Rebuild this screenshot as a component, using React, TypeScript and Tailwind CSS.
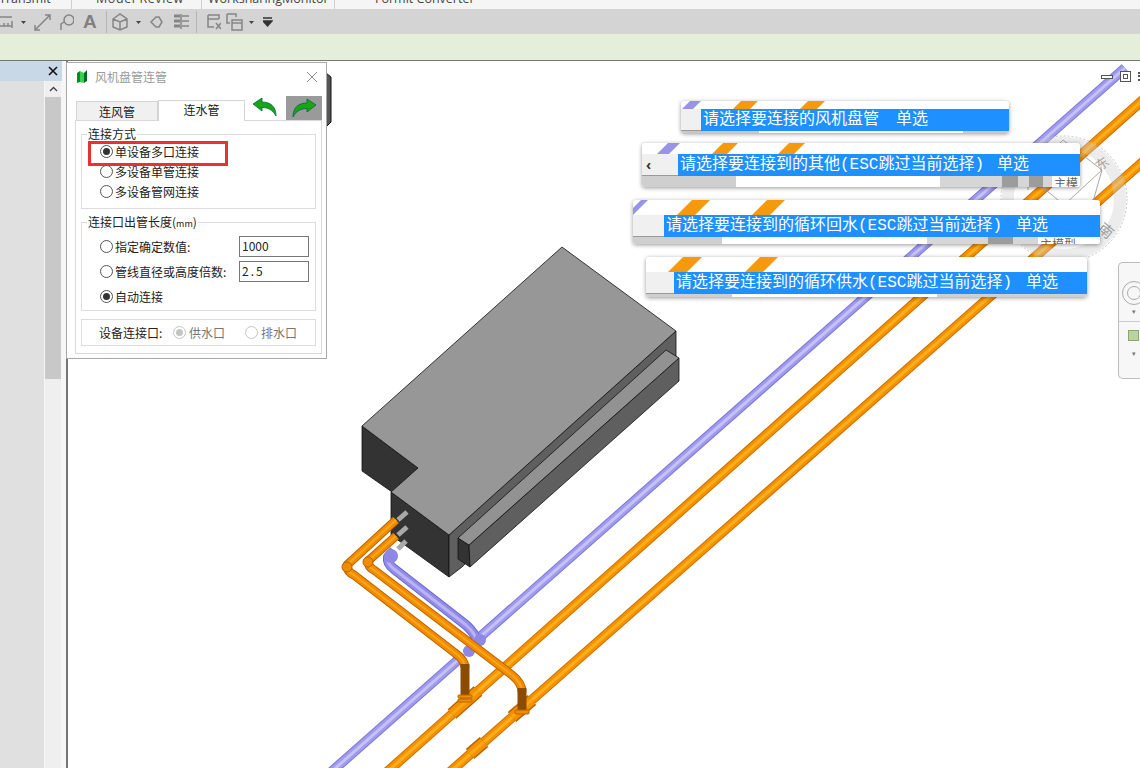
import React from 'react';

const CJK = { fontFamily: '"Noto Sans CJK SC", sans-serif' };

interface Stripe {
  x: number;
  w: number;
  color: string;
}

interface Banner {
  left: number;
  top: number;
  width: number;
  stripH: number;
  cellW: number;
  blueH: number;
  bottomH: number;
  chevron?: boolean;
  title: string;
  gap: number;
  stripes: Stripe[];
  slots: { w: number; cls: string; label?: string }[];
}

const BANNERS: Banner[] = [
  {
    left: 681, top: 40, width: 328, stripH: 8, cellW: 20, blueH: 22, bottomH: 2, title: '请选择要连接的风机盘管', gap: 17,
    stripes: [{ x: 1, w: 19, color: '#9a94e6' }, { x: 52, w: 25, color: '#f59a0c' }, { x: 119, w: 25, color: '#f59a0c' }],
    slots: [{ w: 78, cls: 'bg-[#c8c8c8]' }, { w: 204, cls: 'bg-white' }, { w: 46, cls: 'bg-[#c8c8c8]' }],
  },
  {
    left: 642, top: 82, width: 438, stripH: 11, cellW: 36, blueH: 22, bottomH: 11, chevron: true, title: '请选择要连接到的其他(ESC跳过当前选择)', gap: 13,
    stripes: [{ x: 15, w: 23, color: '#9a94e6' }, { x: 70, w: 26, color: '#f59a0c' }, { x: 136, w: 27, color: '#f59a0c' }],
    slots: [
      { w: 94, cls: 'bg-[#cfcfcf]' }, { w: 204, cls: 'bg-white' }, { w: 62, cls: 'bg-[#d6d6d6]' },
      { w: 16, cls: 'bg-[#9c9c9c]' }, { w: 11, cls: 'bg-[#d6d6d6]' }, { w: 14, cls: 'bg-[#9c9c9c]' },
      { w: 9, cls: 'bg-[#d6d6d6]' }, { w: 28, cls: 'bg-white', label: '主模' },
    ],
  },
  {
    left: 633, top: 139, width: 467, stripH: 15, cellW: 31, blueH: 22, bottomH: 7, title: '请选择要连接到的循环回水(ESC跳过当前选择)', gap: 14,
    stripes: [{ x: 0, w: 8, color: '#9a94e6' }, { x: 44, w: 33, color: '#f59a0c' }, { x: 119, w: 33, color: '#f59a0c' }],
    slots: [
      { w: 89, cls: 'bg-[#cfcfcf]' }, { w: 205, cls: 'bg-white' }, { w: 61, cls: 'bg-[#d6d6d6]' },
      { w: 25, cls: 'bg-[#9c9c9c]' }, { w: 25, cls: 'bg-[#d6d6d6]' }, { w: 62, cls: 'bg-white', label: '主模型' },
    ],
  },
  {
    left: 646, top: 196, width: 441, stripH: 15, cellW: 28, blueH: 22, bottomH: 3, title: '请选择要连接到的循环供水(ESC跳过当前选择)', gap: 14,
    stripes: [{ x: 22, w: 34, color: '#f59a0c' }, { x: 99, w: 33, color: '#f59a0c' }],
    slots: [{ w: 86, cls: 'bg-[#cfcfcf]' }, { w: 205, cls: 'bg-white' }, { w: 150, cls: 'bg-[#cfcfcf]' }],
  },
];

function Pipe({ d, colors, widths }: { d: string; colors: string[]; widths: number[] }) {
  return (
    <>
      {colors.map((c, i) => (
        <path key={i} d={d} fill="none" stroke={c} strokeWidth={widths[i]} strokeLinejoin="round" strokeLinecap="butt" />
      ))}
    </>
  );
}

const ORANGE = { colors: ['#c96f00', '#f39200', '#ffae1a'], widths: [10, 8, 3] };
const THIN_ORANGE = { colors: ['#b86400', '#f08c00', '#ffa514'], widths: [9, 7, 2] };
const PURPLE = { colors: ['#7d77d8', '#a09bec', '#c6c2f8'], widths: [10, 8, 3] };
const TEE = { colors: ['#b86400', '#f39200', '#ffa514'], widths: [13, 10, 3] };

function Scene() {
  return (
    <svg className="absolute inset-0 h-full w-full" viewBox="68 61 1072 707">
      {/* long mains */}
      <Pipe d="M330 773 L458 660" {...PURPLE} />
      <Pipe d="M480 637 L1125 68" {...PURPLE} />
      <Pipe d="M387 772 L1145 98" {...ORANGE} />
      <Pipe d="M450 772 L1145 160" {...ORANGE} />
      <Pipe d="M452 714 L478 691" {...TEE} />
      <Pipe d="M512 717 L532 700" {...TEE} />
      <Pipe d="M470 754 L484 742" {...TEE} />

      {/* compass watermark, washed over the pipes */}
      <circle cx="1064" cy="199" r="56" fill="none" stroke="#cfcfcf" strokeOpacity="0.4" strokeWidth="12" />
      <circle cx="1064" cy="199" r="63" fill="none" stroke="#c4c4c4" strokeDasharray="2 2" />
      <g fill="none" stroke="#a8a8a8">
        <path d="M1063 140 L1102 170 L1064 205 L1028 175 Z" />
        <path d="M1064 205 V222 M1102 170 L1092 205 M1028 175 V190" />
      </g>
      <text x="1096" y="168" fontSize="13" fill="#a0a0a0" transform="rotate(-35 1103 164)" style={CJK}>东</text>
      <text x="1099" y="236" fontSize="15" fill="#a0a0a0" transform="rotate(40 1106 230)" style={CJK}>南</text>

      {/* fan coil body */}
      <g stroke="#111" strokeWidth="0.8" strokeLinejoin="round">
        <polygon points="362,426 418,468 392,492 362,471" fill="#333" />
        <polygon points="391,492 449,535 449,577 391,535" fill="#333" />
        <polygon points="449,535 676,331 676,357 462,567 449,577" fill="#5f5f5f" />
        <polygon points="562,247 676,331 449,535 391,492 418,468 362,426" fill="#979797" />
        <polygon points="458,538 469,545 470,567 458,559" fill="#333" />
        <polygon points="469,545 679,358 679,381 470,567" fill="#5f5f5f" />
        <polygon points="666,350 679,358 469,545 458,538" fill="#929292" />
      </g>

      {/* stub ends */}
      <g stroke="#a9a9a9" strokeWidth="5">
        <path d="M398 520 L407 512" />
        <path d="M398 535 L407 527" />
        <path d="M398 549 L406 541" />
      </g>

      {/* branch pipes */}
      <Pipe d="M394 551 L388 557 Q387 564 394 569 L466 625 Q476 634 477 642" colors={['#6c66cc', '#928ce8', '#b8b4f5']} widths={[10, 8, 3]} />
      <circle cx="391" cy="556" r="7" fill="#8d87e6" />
      <circle cx="480" cy="640" r="6" fill="#8d87e6" />
      <circle cx="469" cy="651" r="6" fill="#8d87e6" />
      <Pipe d="M396 520 L347 565 Q347 572 354 575 L455 653 Q465 660 465 668" {...THIN_ORANGE} />
      <Pipe d="M396 536 L368 561 Q368 567 374 570 L512 675 Q522 683 522 692" {...THIN_ORANGE} />
      <path d="M465 664 L465 698" stroke="#8c4c00" strokeWidth="9" />
      <path d="M522 688 L522 712" stroke="#8c4c00" strokeWidth="9" />
      <g fill="#f08c00" stroke="#b86400">
        <rect x="458" y="695" width="14" height="3" rx="1" />
        <rect x="458" y="699" width="14" height="3" rx="1" />
        <rect x="515" y="710" width="14" height="4" rx="1" />
        <circle cx="347" cy="567" r="5" />
        <circle cx="368" cy="562" r="5" />
      </g>

      {/* grey block behind the dialog */}
      <polygon points="326,73 331,77 331,122 326,127" fill="#555" stroke="#111" strokeWidth="1" />
    </svg>
  );
}

function Radio({ on, disabled }: { on?: boolean; disabled?: boolean }) {
  return (
    <span className={`flex h-[13px] w-[13px] shrink-0 items-center justify-center rounded-full border bg-white ${disabled ? 'border-[#c4c4c4]' : 'border-[#555]'}`}>
      {on && <span className={`h-[7px] w-[7px] rounded-full ${disabled ? 'bg-[#c4c4c4]' : 'bg-[#333]'}`} />}
    </span>
  );
}

function RadioRow({ label, on, className }: { label: string; on?: boolean; className?: string }) {
  return (
    <div className={`flex items-center gap-[2px] ${className ?? ''}`}>
      <Radio on={on} />
      <span>{label}</span>
    </div>
  );
}

function Group({ legend, className, children }: { legend: React.ReactNode; className: string; children: React.ReactNode }) {
  return (
    <div className={`relative border border-[#dcdcdc] ${className}`}>
      <span className="absolute left-[5px] top-[-9px] bg-white px-px leading-[16px]">{legend}</span>
      {children}
    </div>
  );
}

function Arrow({ flip }: { flip?: boolean }) {
  return (
    <svg width="26" height="20" viewBox="0 0 26 20" style={flip ? { transform: 'scaleX(-1)' } : undefined}>
      <path d="M1 7 L10 1 L10 5 C18 5 24 9 24 19 C21 13 16 10.5 10 10.5 L10 14 Z" fill="#16a616" stroke="#064" strokeWidth="0.8" />
    </svg>
  );
}

function Dialog() {
  return (
    <div className="absolute left-[66px] top-px flex h-[297px] w-[261px] flex-col border border-[#a8a8a8] bg-white text-[12px] text-[#222]" style={CJK}>
      <div className="flex h-[27px] shrink-0 items-center pl-[9px] pr-[8px]">
        <svg width="12" height="15" viewBox="0 0 12 15">
          <path d="M1 4 L4 2 V13 L1 14 Z" fill="#0a8a2a" />
          <path d="M4 2 L8 4 V14 L4 13 Z" fill="#35d24f" />
          <path d="M8 4 L11 1 V12 L8 14 Z" fill="#0a6a22" />
        </svg>
        <span className="ml-[7px] text-[#9a9a9a]">风机盘管连管</span>
        <svg className="ml-auto" width="12" height="12" viewBox="0 0 12 12">
          <path d="M1 1 L11 11 M11 1 L1 11" stroke="#8c8c8c" fill="none" />
        </svg>
      </div>
      <div className="flex h-[30px] shrink-0 items-end pl-[9px]">
        <div className="flex h-[19px] w-[82px] items-center justify-center border border-b-0 border-[#d4d4d4] bg-[#f0f0f0] pt-[2px]">连风管</div>
        <div className="z-10 -mb-px flex h-[21px] w-[87px] items-center justify-center border border-b-0 border-[#d4d4d4] bg-white pb-[3px]">连水管</div>
        <div className="mb-[1px] ml-[7px] flex h-[24px] w-[26px] items-center"><Arrow /></div>
        <div className="ml-[8px] flex h-[24px] w-[36px] items-center justify-center bg-[#9a9a9a]"><Arrow flip /></div>
      </div>
      <div className="ml-[8px] flex h-[234px] w-[247px] flex-col border border-[#d9d9d9] px-[5px] pt-[13px]">
        <Group legend="连接方式" className="h-[75px]">
          <div className="flex flex-col gap-[3px] pl-[18px] pt-[8px] leading-[17px]">
            <RadioRow label="单设备多口连接" on />
            <RadioRow label="多设备单管连接" />
            <RadioRow label="多设备管网连接" />
          </div>
        </Group>
        <Group legend={<>连接口出管长度(<span className="text-[9px]">mm</span>)</>} className="mt-[13px] h-[89px]">
          <div className="flex flex-col pl-[18px] pr-[6px] pt-[13px]">
            <div className="flex h-[21px] items-center justify-between">
              <RadioRow label="指定确定数值:" />
              <div className="h-[21px] w-[70px] border border-[#777] pl-[2px] text-[12px] leading-[17px]">1000</div>
            </div>
            <div className="mt-[4px] flex h-[21px] items-center justify-between">
              <RadioRow label="管线直径或高度倍数:" />
              <div className="h-[21px] w-[70px] border border-[#777] pl-[2px] leading-[17px] tracking-[2px]">2.5</div>
            </div>
            <RadioRow label="自动连接" on className="mt-[4px] h-[21px]" />
          </div>
        </Group>
        <div className="mt-[8px] flex h-[27px] items-center border border-[#dcdcdc] pl-[17px]">
          <span className="w-[74px]">设备连接口:</span>
          <Radio on disabled />
          <span className="ml-[3px] text-[#777]">供水口</span>
          <span className="ml-[20px]"><Radio disabled /></span>
          <span className="ml-[3px] text-[#777]">排水口</span>
        </div>
      </div>
      {/* red annotation box around the first option */}
      <div className="absolute left-[21px] top-[78px] h-[25px] w-[140px] border-[3px] border-[#e8322f]" />
    </div>
  );
}

function PromptBanner({ b }: { b: Banner }) {
  return (
    <div
      className="absolute flex flex-col overflow-hidden rounded-[3px] bg-white shadow-[0_1px_4px_rgba(0,0,0,0.4)]"
      style={{ left: b.left, top: b.top, width: b.width }}
    >
      <svg width={b.width} height={b.stripH} className="block shrink-0">
        {b.stripes.map((s) => (
          <polygon
            key={s.x}
            points={`${s.x},${b.stripH} ${s.x + s.w - b.stripH},${b.stripH} ${s.x + s.w},0 ${s.x + b.stripH},0`}
            fill={s.color}
          />
        ))}
      </svg>
      <div className="flex shrink-0" style={{ height: b.blueH }}>
        <div className="flex shrink-0 items-center border-b border-[#9a9a9a] bg-[#f0f0f0] pl-[4px] text-[14px] font-bold text-[#333]" style={{ width: b.cellW }}>
          {b.chevron ? '‹' : ''}
        </div>
        <div
          className="flex flex-1 items-center whitespace-pre bg-[#1e90ff] pl-[2px] text-[16px] leading-[22px] text-white"
          style={{ fontFamily: '"Liberation Mono", "Noto Sans CJK SC", monospace' }}
        >
          <span>{b.title}</span>
          <span style={{ marginLeft: b.gap }}>单选</span>
        </div>
      </div>
      <div className="flex shrink-0 overflow-hidden" style={{ height: b.bottomH }}>
        {b.slots.map((s, i) => (
          <div key={i} className={`shrink-0 overflow-hidden pl-[2px] text-[12px] leading-[13px] text-[#666] ${s.cls}`} style={{ width: s.w, ...CJK }}>
            {s.label}
          </div>
        ))}
      </div>
    </div>
  );
}

function ToolIcon({ w, ml, children }: { w: number; ml: number; children: React.ReactNode }) {
  return (
    <svg width={w} height="20" viewBox={`0 0 ${w} 20`} className="shrink-0" style={{ marginLeft: ml }} fill="none" stroke="#858585" strokeWidth="1.5">
      {children}
    </svg>
  );
}

const Caret = ({ ml }: { ml: number }) => (
  <ToolIcon w={6} ml={ml}>
    <path d="M0 9 H5 L2.5 12 Z" fill="#444" stroke="none" />
  </ToolIcon>
);

const Sep = ({ ml }: { ml: number }) => <div className="h-[22px] w-px shrink-0 bg-[#b4b4b4]" style={{ marginLeft: ml }} />;

function Toolbar() {
  return (
    <div className="flex h-[25px] shrink-0 items-center bg-[#d4d4d4]">
      <ToolIcon w={13} ml={0}>
        <path d="M0 5 H12 M0 14 H12 M12 9 V16 M4 14 V11 M8 14 V11" />
      </ToolIcon>
      <Caret ml={8} />
      <ToolIcon w={17} ml={7}>
        <path d="M1 18 L16 3 M1 13 V18 H6 M11 3 H16 V8" />
      </ToolIcon>
      <ToolIcon w={16} ml={7}>
        <circle cx="11" cy="8" r="5" />
        <path d="M3 18 V12 L6 10" />
      </ToolIcon>
      <span className="ml-[9px] w-[14px] text-[19px] font-bold leading-none text-[#808080]" style={{ fontFamily: '"Liberation Sans", sans-serif' }}>A</span>
      <Sep ml={9} />
      <ToolIcon w={16} ml={5}>
        <path d="M1 7 L8 2 L15 7 V15 L8 18 L1 15 Z M1 7 L8 10 L15 7 M8 10 V18" />
      </ToolIcon>
      <Caret ml={8} />
      <ToolIcon w={13} ml={8}>
        <path d="M1 10 L6 5 H9 L12 10 L9 15 H6 Z" />
      </ToolIcon>
      <ToolIcon w={17} ml={10}>
        <path d="M1 4 H7 M1 9 H7 M1 14 H7" strokeWidth="3" />
        <path d="M9 4 H16 M9 9 H16 M9 14 H16 M8 2 V17" />
      </ToolIcon>
      <Sep ml={6} />
      <ToolIcon w={14} ml={10}>
        <path d="M1 3 H12 V7 M1 3 V15 H7 M1 7 H12 M9 11 L14 17 M14 11 L9 17" />
      </ToolIcon>
      <ToolIcon w={17} ml={5}>
        <path d="M1 2 H10 V5 M1 2 V11 H4 M6 8 H16 V18 H6 Z M6 11 H16" />
      </ToolIcon>
      <Caret ml={6} />
      <ToolIcon w={10} ml={8}>
        <path d="M0 6 H9 M0 9 H9 L4.5 14 Z" stroke="#333" fill="#333" />
      </ToolIcon>
    </div>
  );
}

function TabStrip() {
  const tab = 'absolute top-[-9px] whitespace-nowrap text-[12.5px] leading-[16px] text-[#444]';
  return (
    <div className="relative h-[9px] shrink-0 overflow-hidden bg-[#f5f5f5]" style={{ fontFamily: '"Open Sans", sans-serif' }}>
      <span className={`${tab} left-[-1px]`}>Transmit</span>
      <span className={`${tab} left-[96px] tracking-[0.6px]`}>Model Review</span>
      <span className={`${tab} left-[208px]`}>WorksharingMonitor</span>
      <span className={`${tab} left-[375px]`}>Formit Converter</span>
      <div className="absolute left-[71px] top-0 h-full w-px bg-[#cfcfcf]" />
      <div className="absolute left-[201px] top-0 h-full w-px bg-[#cfcfcf]" />
      <div className="absolute left-[334px] top-0 h-full w-px bg-[#cfcfcf]" />
    </div>
  );
}

function LeftPanel() {
  return (
    <div className="flex w-[68px] shrink-0 flex-col border-r-2 border-[#777] bg-[#f6f6f6]">
      <div className="flex h-[20px] w-[62px] shrink-0 items-center justify-end bg-[#c9d8e6] pr-[4px]">
        <svg width="10" height="10" viewBox="0 0 10 10">
          <path d="M1 1 L9 9 M9 1 L1 9" stroke="#111" strokeWidth="1.6" />
        </svg>
      </div>
      <div className="flex flex-1">
        <div className="w-[44px] bg-[#e0e0e0]" />
        <div className="ml-px flex w-[16px] flex-col bg-[#efefef]">
          <div className="flex h-[16px] shrink-0 items-center justify-center">
            <svg width="9" height="6" viewBox="0 0 9 6">
              <path d="M1 5 L4.5 1.5 L8 5" stroke="#444" strokeWidth="1.4" fill="none" />
            </svg>
          </div>
          <div className="h-[282px] bg-[#c8c8c8]" />
        </div>
      </div>
    </div>
  );
}

export default function App() {
  return (
    <div className="relative flex h-[768px] w-[1140px] flex-col overflow-hidden bg-white">
      <TabStrip />
      <Toolbar />
      <div className="h-[27px] shrink-0 border-b border-[#777] bg-[#e5eed8]" />
      <div className="relative flex flex-1">
        <LeftPanel />
        <div className="relative flex-1 bg-white">
          <Scene />
          {/* view window buttons */}
          <div className="absolute right-[-2px] top-[10px] flex items-center gap-[7px]">
            <div className="h-[4px] w-[12px] border border-[#555] bg-white" />
            <div className="h-[11px] w-[11px] border border-[#555] bg-white p-[2px]"><div className="h-full w-full border border-[#555]" /></div>
            <div className="h-[9px] w-[4px] border-l-2 border-dotted border-[#555]" />
          </div>
          {/* navigation bar */}
          <div className="absolute right-0 top-[201px] flex h-[117px] w-[22px] flex-col items-start overflow-hidden rounded-l-[5px] border border-r-0 border-[#bdbdbd] bg-[#f7f7f7] pl-[3px] pt-[18px]">
            <div className="flex h-[24px] w-[24px] shrink-0 items-center justify-center rounded-full border border-[#aaa]">
              <div className="h-[14px] w-[14px] rounded-full border border-[#aaa]" />
            </div>
            <div className="ml-[10px] mt-[3px] text-[7px] leading-[7px] text-[#777]">▾</div>
            <div className="-ml-[3px] mt-[6px] h-px w-[22px] shrink-0 bg-[#ccc]" />
            <div className="ml-[6px] mt-[8px] h-[11px] w-[11px] shrink-0 border border-[#8aa86e] bg-[#bcd3a0]" />
            <div className="ml-[10px] mt-[9px] text-[7px] leading-[7px] text-[#777]">▾</div>
          </div>
        </div>
        <Dialog />
        {BANNERS.map((b) => (
          <PromptBanner key={b.left} b={b} />
        ))}
      </div>
    </div>
  );
}
